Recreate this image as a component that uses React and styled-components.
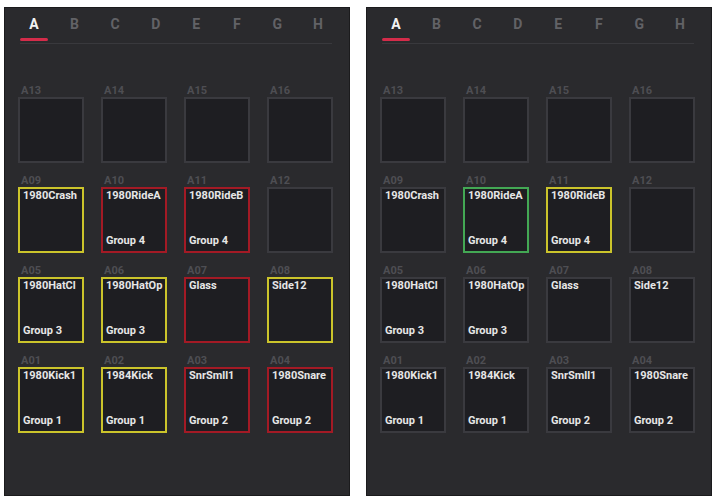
import React from 'react';
import styled, { createGlobalStyle } from 'styled-components';

const GlobalStyle = createGlobalStyle`
  body {
    margin: 0;
    background: #ffffff;
    font-family: Roboto, 'Liberation Sans', sans-serif;
  }
`;

const TABS = ['A', 'B', 'C', 'D', 'E', 'F', 'G', 'H'];

const PADS = [
  { id: 'A13' }, { id: 'A14' }, { id: 'A15' }, { id: 'A16' },
  { id: 'A09', name: '1980Crash' },
  { id: 'A10', name: '1980RideA', group: 'Group 4' },
  { id: 'A11', name: '1980RideB', group: 'Group 4' },
  { id: 'A12' },
  { id: 'A05', name: '1980HatCl', group: 'Group 3' },
  { id: 'A06', name: '1980HatOp', group: 'Group 3' },
  { id: 'A07', name: 'Glass' },
  { id: 'A08', name: 'Side12' },
  { id: 'A01', name: '1980Kick1', group: 'Group 1' },
  { id: 'A02', name: '1984Kick', group: 'Group 1' },
  { id: 'A03', name: 'SnrSmll1', group: 'Group 2' },
  { id: 'A04', name: '1980Snare', group: 'Group 2' },
];

const leftColors = {
  A09: 'yellow', A10: 'red', A11: 'red',
  A05: 'yellow', A06: 'yellow', A07: 'red', A08: 'yellow',
  A01: 'yellow', A02: 'yellow', A03: 'red', A04: 'red',
};

const rightColors = { A10: 'green', A11: 'yellow' };

const borderColors = {
  yellow: '#cbc42b',
  red: '#a31a25',
  green: '#43a854',
  none: '#3a3a3f',
};

const PadBank = ({ colors }) => (
  <Panel>
    <TabRow>
      {TABS.map((t, i) => (
        <Tab key={t}>
          <TabLetter $active={i === 0}>{t}</TabLetter>
          <Indicator $active={i === 0} />
        </Tab>
      ))}
    </TabRow>
    <Grid>
      {PADS.map(p => (
        <Cell key={p.id}>
          <PadLabel>{p.id}</PadLabel>
          <Pad $color={borderColors[colors[p.id] || 'none']}>
            <PadName>{p.name}</PadName>
            <PadGroup>{p.group}</PadGroup>
          </Pad>
        </Cell>
      ))}
    </Grid>
  </Panel>
);

const App = () => (
  <>
    <GlobalStyle />
    <Page>
      <PadBank colors={leftColors} />
      <PadBank colors={rightColors} />
    </Page>
  </>
);

const Page = styled.div`
  display: flex;
  gap: 16px;
  padding: 7px 0 0 4px;
`;

const Panel = styled.div`
  box-sizing: border-box;
  width: 346px;
  height: 489px;
  background: #2a2a2d;
  border: 1px solid #1b1b1d;
  padding: 8px 0 0 13px;
`;

const TabRow = styled.div`
  display: flex;
  justify-content: space-between;
  width: 312px;
  margin-left: 2px;
  padding-bottom: 2px;
  border-bottom: 1px solid #39393d;
`;

const Tab = styled.div`
  width: 28px;
  display: flex;
  flex-direction: column;
  align-items: center;
`;

const TabLetter = styled.span`
  font-size: 14px;
  line-height: 16px;
  font-weight: 700;
  color: ${p => (p.$active ? '#f2f2f2' : '#626266')};
  margin-bottom: 6px;
`;

const Indicator = styled.div`
  width: 28px;
  height: 3px;
  border-radius: 2px;
  background: ${p => (p.$active ? '#d42c4a' : 'transparent')};
`;

const Grid = styled.div`
  display: grid;
  grid-template-columns: repeat(4, 66px);
  column-gap: 17px;
  row-gap: 12px;
  margin-top: 41px;
`;

const Cell = styled.div`
  display: flex;
  flex-direction: column;
`;

const PadLabel = styled.div`
  height: 12px;
  font-size: 11px;
  line-height: 12px;
  font-weight: 700;
  color: #4e4e53;
  padding-left: 3px;
`;

const Pad = styled.div`
  box-sizing: border-box;
  width: 66px;
  height: 66px;
  background: #1e1e22;
  border: 2px solid ${p => p.$color};
  display: flex;
  flex-direction: column;
  justify-content: space-between;
  padding: 0 1px 4px 3px;
  font-size: 11px;
  line-height: 13px;
  font-weight: 700;
  color: #e6e6e6;
  white-space: nowrap;
  overflow: hidden;
`;

const PadName = styled.div`
  min-height: 13px;
`;

const PadGroup = styled.div`
  min-height: 13px;
`;

export default App;
